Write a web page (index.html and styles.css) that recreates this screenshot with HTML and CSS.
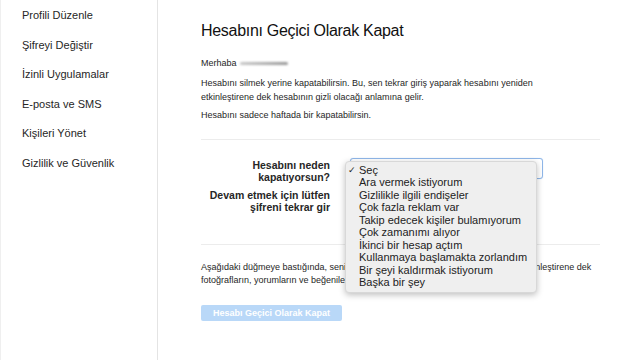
FILE: index.html
```html
<!DOCTYPE html>
<html lang="tr">
<head>
<meta charset="utf-8">
<link rel="stylesheet" href="styles.css">
</head>
<body>
<div class="page">
  <nav class="side">
    <a class="side-item">Profili Düzenle</a>
    <a class="side-item">Şifreyi Değiştir</a>
    <a class="side-item">İzinli Uygulamalar</a>
    <a class="side-item">E-posta ve SMS</a>
    <a class="side-item">Kişileri Yönet</a>
    <a class="side-item">Gizlilik ve Güvenlik</a>
  </nav>
  <main class="main">
    <h1 class="title">Hesabını Geçici Olarak Kapat</h1>
    <p class="hello">Merhaba <span class="blur"></span></p>
    <p class="text">Hesabını silmek yerine kapatabilirsin. Bu, sen tekrar giriş yaparak hesabını yeniden etkinleştirene dek hesabının gizli olacağı anlamına gelir.</p>
    <p class="text">Hesabını sadece haftada bir kapatabilirsin.</p>
    <div class="divider top"></div>
    <div class="form">
      <div class="row">
        <label class="label">Hesabını neden<br>kapatıyorsun?</label>
        <div class="field">
          <div class="select"></div>
          <ul class="menu">
            <li class="opt checked"><span class="check">✓</span>Seç</li>
            <li class="opt">Ara vermek istiyorum</li>
            <li class="opt">Gizlilikle ilgili endişeler</li>
            <li class="opt">Çok fazla reklam var</li>
            <li class="opt">Takip edecek kişiler bulamıyorum</li>
            <li class="opt">Çok zamanımı alıyor</li>
            <li class="opt">İkinci bir hesap açtım</li>
            <li class="opt">Kullanmaya başlamakta zorlandım</li>
            <li class="opt">Bir şeyi kaldırmak istiyorum</li>
            <li class="opt">Başka bir şey</li>
          </ul>
        </div>
      </div>
      <div class="row">
        <label class="label">Devam etmek için lütfen<br>şifreni tekrar gir</label>
        <div class="field"></div>
      </div>
    </div>
    <div class="divider"></div>
    <p class="text note">Aşağıdaki düğmeye bastığında, senin hesabını tekrar giriş yaparak onu yeniden etkinleştirene dek fotoğrafların, yorumların ve beğenilerin gizlenecek.</p>
    <button class="btn">Hesabı Geçici Olarak Kapat</button>
  </main>
</div>
</body>
</html>
```
FILE: styles.css
```css
* { box-sizing: border-box; }
html, body { margin: 0; padding: 0; background: #fff; }
body { font-family: "Liberation Sans", Arial, sans-serif; color: #262626; width: 620px; height: 360px; overflow: hidden; }
.page { display: flex; height: 360px; }
.side {
  width: 158px;
  border-right: 1px solid #e4e4e4;
  border-left: 1px solid #efefef;
  display: flex;
  flex-direction: column;
  padding-top: 8px;
}
.side-item {
  font-size: 11px;
  line-height: 14px;
  padding: 0 0 15.5px 21px;
  color: #262626;
}
.main { flex: 1; padding: 21px 20px 0 43px; position: relative; }
.title { font-size: 16px; letter-spacing: -0.3px; font-weight: 400; margin: 0 0 16px; line-height: 20px; color: #111; }
.hello { font-size: 9px; margin: 0 0 8px; line-height: 12px; display: flex; align-items: center; gap: 3px; }
.blur { display: inline-block; width: 48px; height: 3px; background: linear-gradient(90deg, #c8c8c8, #999); border-radius: 2px; filter: blur(1.1px); }
.text { font-size: 9px; line-height: 13.5px; margin: 0 0 5px; color: #262626; max-width: 358px; }
.divider { height: 1px; background: #ececec; width: 399px; }
.divider.top { margin-top: 16px; }
.form { padding: 19px 0 31px; display: flex; flex-direction: column; gap: 6px; }
.row { display: flex; gap: 20px; }
.label { width: 129px; text-align: right; font-weight: 700; font-size: 10.5px; line-height: 12px; color: #262626; }
.field { position: relative; width: 193px; }
.select { height: 21px; margin-top: -1px; border: 1.5px solid #8fb6e8; border-radius: 3px; background: #fff; box-shadow: 0 0 1px #b8d2f2; }
.menu {
  position: absolute;
  left: -5px;
  top: 2px;
  width: 192px;
  margin: 0;
  padding: 2px 0 3px;
  list-style: none;
  background: #efefef;
  border: 1px solid #d8d8d8;
  border-radius: 4px;
  box-shadow: 0 2px 6px rgba(0,0,0,0.25);
  z-index: 2;
}
.opt { font-size: 11px; line-height: 12.5px; padding-left: 13px; color: #222; position: relative; white-space: nowrap; }
.check { position: absolute; left: 2px; font-size: 9px; }
.note { margin-top: 16px; max-width: 396px; }
.btn {
  margin-top: 17px;
  display: block;
  width: 141px;
  height: 16px;
  padding: 0;
  border: 0;
  border-radius: 2px;
  background: #b9d8f8;
  color: #fff;
  font-family: "Liberation Sans", Arial, sans-serif;
  font-weight: 700;
  font-size: 9px;
}
```
